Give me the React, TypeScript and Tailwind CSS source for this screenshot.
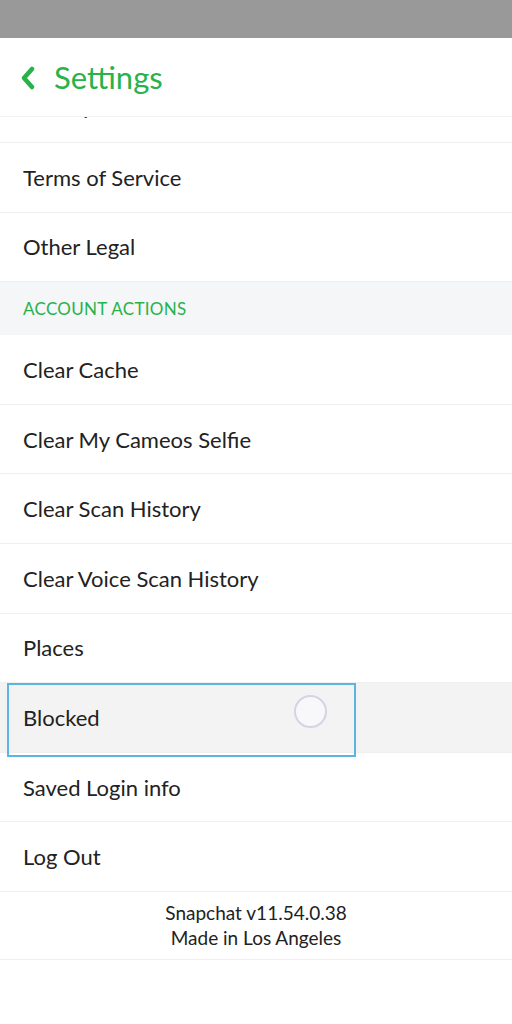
const rowsTop = ['Terms of Service', 'Other Legal'];
const rowsAccount = [
  'Clear Cache',
  'Clear My Cameos Selfie',
  'Clear Scan History',
  'Clear Voice Scan History',
  'Places',
  'Blocked',
  'Saved Login info',
  'Log Out',
];

function Row({ label, active, lift }: { label: string; active?: boolean; lift?: boolean }) {
  return (
    <div
      className={`relative shrink-0 h-[69.6px] flex items-center px-[23px] border-b border-[#efefef] text-[22px] text-[#222] ${
        active ? 'bg-[#f3f3f3]' : 'bg-white'
      } ${lift ? 'pb-[4px]' : ''}`}
    >
      <span>{label}</span>
      {active && (
        <>
          <div className="absolute z-10 left-[7px] top-0 w-[349px] h-[74px] border-2 border-[#5bb4e2]" />
          <div className="absolute z-10 left-[294px] top-[12px] w-[33px] h-[33px] rounded-full border-2 border-[#d4d4e2] bg-[#f8f8fa]" />
        </>
      )}
    </div>
  );
}

export default function App() {
  return (
    <div className="w-[512px] h-[1024px] bg-white overflow-hidden" style={{ fontFamily: 'Lato, "Noto Sans", sans-serif' }}>
      <div className="h-[38px] bg-[#999999]" />
      {/* header */}
      <div className="h-[79px] flex items-center gap-[17px] px-[19px] border-b border-[#f2f2f2] bg-white">
        <svg width="18" height="24" viewBox="0 0 18 24" className="mt-[1px]">
          <path d="M13 3 L5 12 L13 21" fill="none" stroke="#27b24b" strokeWidth="4.5" strokeLinecap="round" strokeLinejoin="round" />
        </svg>
        <span className="text-[31px] text-[#27b24b] mt-[1px]">Settings</span>
      </div>
      {/* clipped row under header */}
      <div className="h-[26px] overflow-hidden flex flex-col justify-end">
        <Row label="Privacy Center" lift />
      </div>
      {rowsTop.map((r) => (
        <Row key={r} label={r} />
      ))}
      <div className="h-[53px] bg-[#f5f6f8] flex items-center px-[23px] text-[17px] text-[#27b24b] tracking-[0.3px]">
        ACCOUNT ACTIONS
      </div>
      {rowsAccount.map((r) => (
        <Row key={r} label={r} active={r === 'Blocked'} />
      ))}
      <div className="h-[68px] flex flex-col items-center justify-center border-b border-[#efefef] text-[19px] leading-[25px] text-[#222]">
        <span>Snapchat v11.54.0.38</span>
        <span>Made in Los Angeles</span>
      </div>
    </div>
  );
}
